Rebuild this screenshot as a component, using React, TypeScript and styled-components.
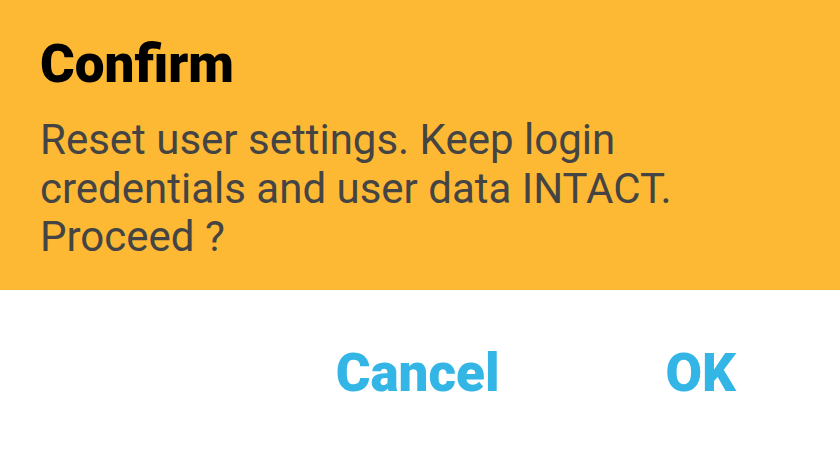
import React from "react";
import styled, { createGlobalStyle } from "styled-components";

const Global = createGlobalStyle`
  html, body { margin: 0; padding: 0; background: #ffffff; }
  body { font-family: Roboto, "Noto Sans", sans-serif; }
`;

const Dialog = styled.div`
  width: 840px;
  height: 449px;
  display: flex;
  flex-direction: column;
  background: #ffffff;
`;

const Header = styled.div`
  background: #fdb934;
  height: 290px;
  box-sizing: border-box;
  padding: 33px 40px 0 40px;
  display: flex;
  flex-direction: column;
`;

const Title = styled.h1`
  margin: 0;
  font-family: Roboto, sans-serif;
  font-weight: 900;
  font-size: 53px;
  line-height: 62px;
  color: #000000;
`;

const Message = styled.p`
  margin: 21px 0 0 0;
  font-family: Roboto, sans-serif;
  font-weight: 400;
  font-size: 42px;
  line-height: 48.5px;
  color: #444444;
  width: 680px;
`;

const Actions = styled.div`
  flex: 1;
  display: flex;
  justify-content: flex-end;
  align-items: center;
  padding-right: 21px;
  padding-top: 7px;
`;

const ActionButton = styled.button`
  border: none;
  background: transparent;
  padding: 0 83px;
  font-family: Roboto, sans-serif;
  font-weight: 900;
  font-size: 53px;
  line-height: 60px;
  color: #33b5e5;
  cursor: pointer;
`;

export default function App() {
  return (
    <>
      <Global />
      <Dialog>
        <Header>
          <Title>Confirm</Title>
          <Message>
            Reset user settings. Keep login credentials and user data INTACT.
            Proceed ?
          </Message>
        </Header>
        <Actions>
          <ActionButton>Cancel</ActionButton>
          <ActionButton>OK</ActionButton>
        </Actions>
      </Dialog>
    </>
  );
}
